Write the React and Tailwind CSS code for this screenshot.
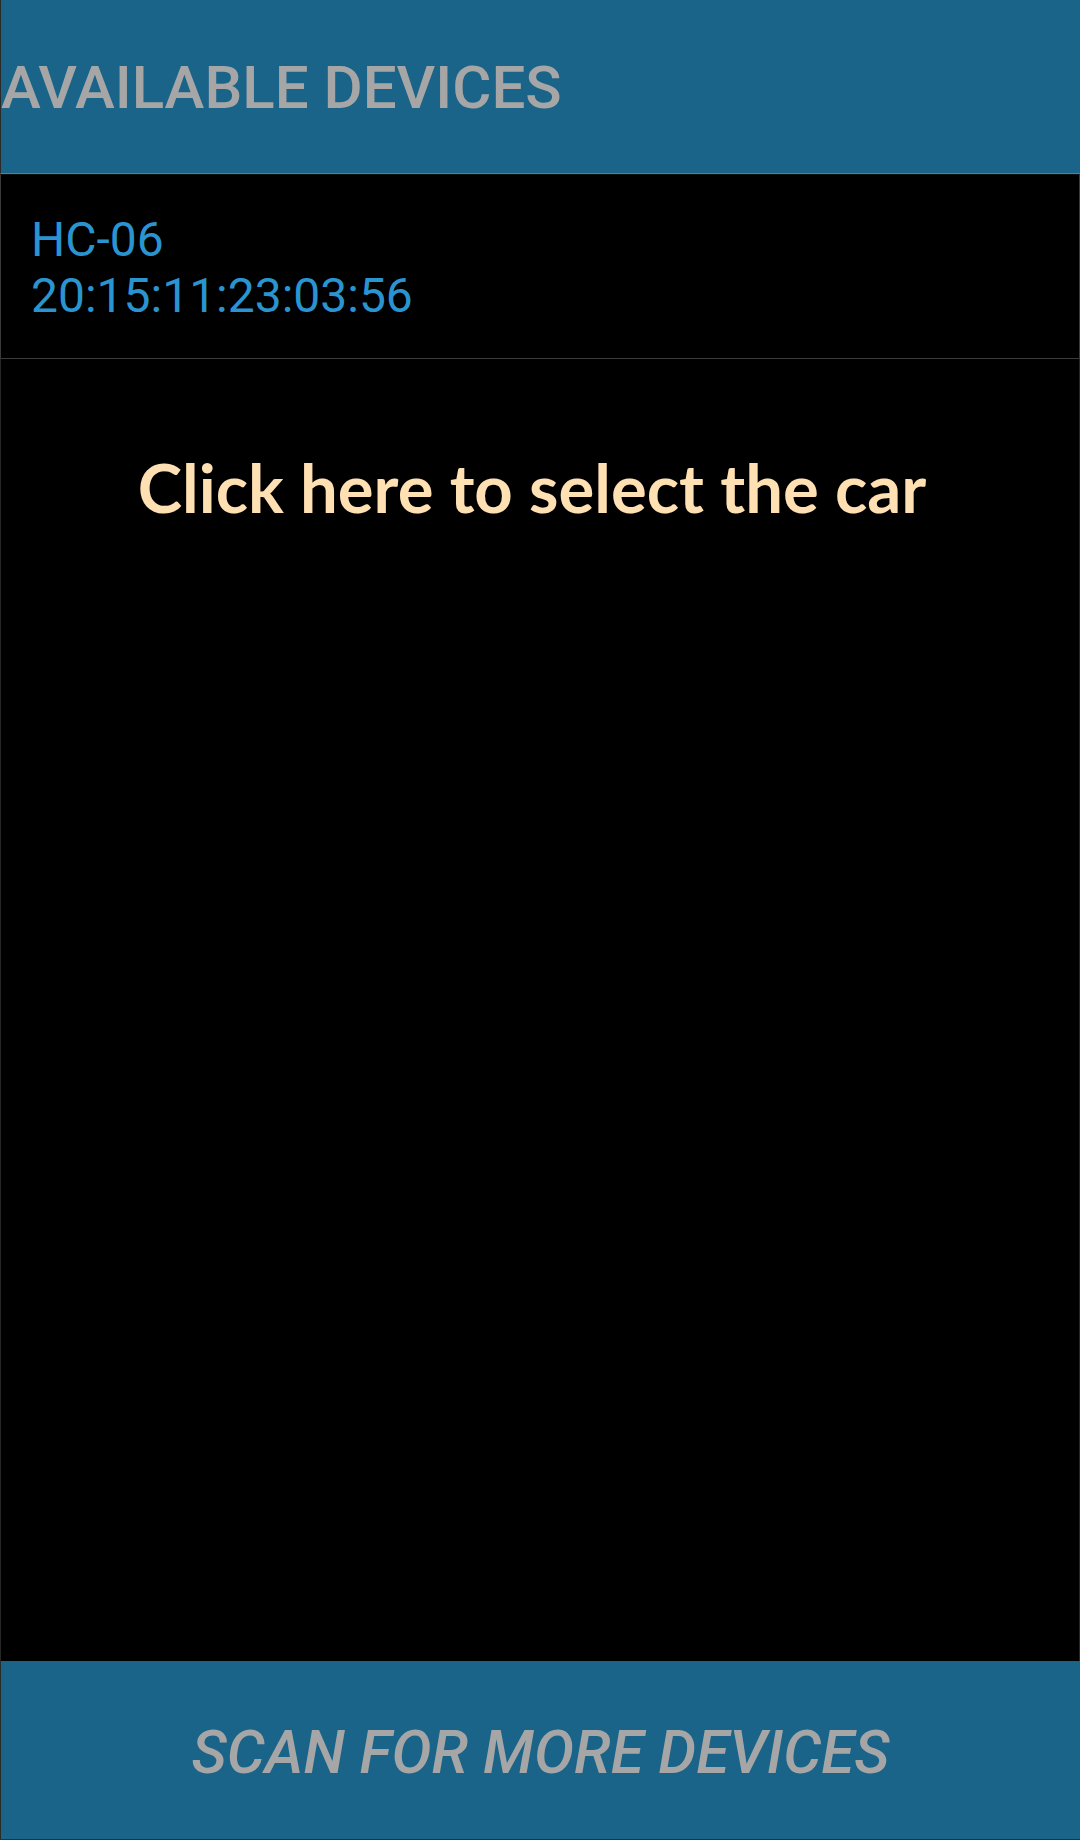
export default function App() {
  return (
    <div className="w-[1080px] h-[1840px] bg-black flex flex-col font-['Roboto',sans-serif]">
      <header className="h-[174px] shrink-0 bg-[#1a6389] border-l border-[#2a2a2a] border-b border-b-[#3f86ab] flex items-center">
        <h1 className="text-[#a6a6a6] text-[60px] font-medium leading-none pt-[3px]">
          AVAILABLE DEVICES
        </h1>
      </header>
      <div className="h-[185px] shrink-0 border border-[#3a3a3a] border-t-[#111] pl-[30px] pt-[37px] text-[#2a94d0] text-[48px] leading-[56px]">
        <div>HC-06</div>
        <div>20:15:11:23:03:56</div>
      </div>
      <main className="flex-1 border-x border-[#262626]">
        <p className="pt-[95px] pr-[16px] text-center text-[#ffe0b2] text-[67px] font-bold leading-none font-['Lato',sans-serif]">
          Click here to select the car
        </p>
      </main>
      <button className="h-[179px] shrink-0 pt-[6px] bg-[#1a6389] border-l border-[#2a2a2a] border-b border-b-[#0e3a52] text-[#a6a6a6] text-[60px] font-medium italic uppercase">
        Scan for more devices
      </button>
    </div>
  );
}
